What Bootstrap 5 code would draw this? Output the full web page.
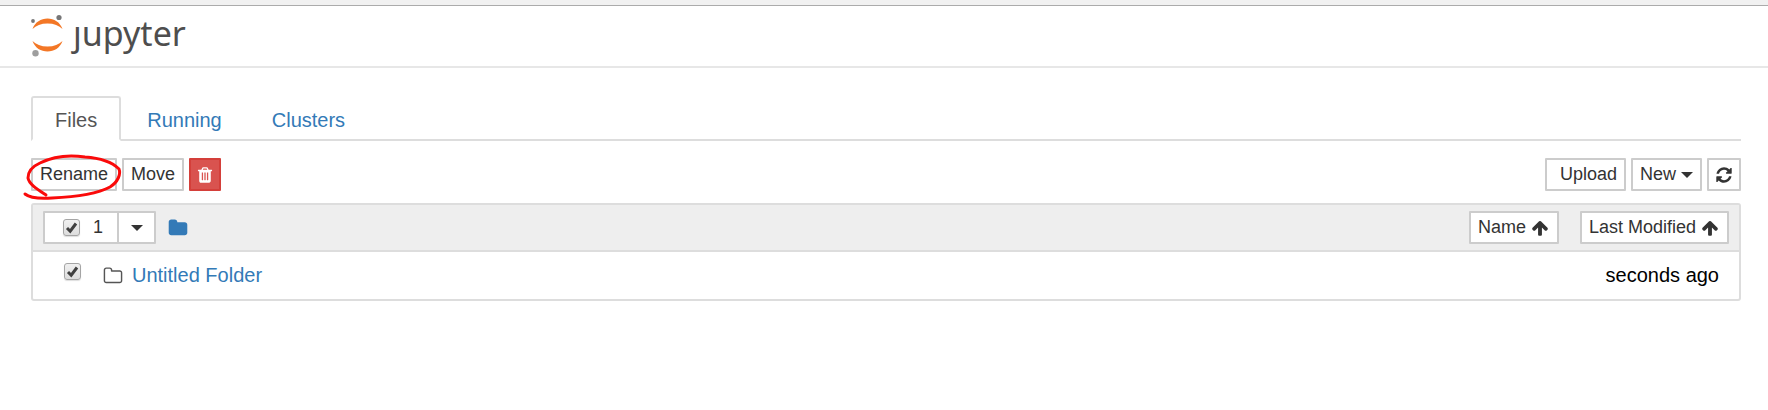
<!DOCTYPE html>
<html lang="en">
<head>
<meta charset="utf-8">
<meta name="viewport" content="width=device-width, initial-scale=1">
<title>Jupyter</title>
<link href="https://cdn.jsdelivr.net/npm/bootstrap@5.3.0/dist/css/bootstrap.min.css" rel="stylesheet">
<style>
body{font-family:"Liberation Sans",Arial,sans-serif;font-size:18px;line-height:25px;color:#000;background:#fff}
a{color:#337ab7;text-decoration:none}
svg.ic{width:18px;height:18px;fill:currentColor;flex:none}
svg.ic-lg{width:20px;height:20px}
.chrome{height:6px;background:#f1f1f1;border-bottom:1px solid #ababab}
.top{height:62px;border-bottom:2px solid #e7e7e7;padding:7px 31px}
.word{font:34px/40px "Noto Sans","Open Sans",sans-serif;color:#4e4e4e}
.word .tail{display:inline-block;clip-path:inset(14px -10px -10px -10px)}
.page-body{padding:28px 27px 0 31px}
.nav-tabs{--bs-nav-tabs-border-width:2px;--bs-nav-tabs-border-color:#ddd;--bs-nav-tabs-border-radius:3px;--bs-nav-tabs-link-active-color:#555;--bs-nav-tabs-link-active-border-color:#ddd #ddd #fff;--bs-nav-link-color:#337ab7;gap:2px;font-size:20px}
.nav-tabs .nav-link{padding:10px 22px;line-height:25px;height:45px}
.tools{margin:17px 0 12px}
.tools-group{gap:5px}
.btn-nb{font-size:18px;line-height:25px;height:33px;padding:2px 7px;border:2px solid #ccc;border-radius:1px;background:#fff;color:#333;display:inline-flex;align-items:center;gap:5px}
.btn-nb:hover{background:#eee;border-color:#bbb}
.btn-nb.del{background:#d9534f;border-color:#d43f3a;color:#fff;width:32px;justify-content:center;padding:0}
.btn-nb.upload{padding-left:13px}
.btn-nb.reload{padding:2px 6px}
.btn-nb.sort{padding-right:8px}
.tri{border:6px solid transparent;border-top-color:#333;border-bottom:0}
.circled{position:relative}
.circled svg{position:absolute;left:-11px;top:-10px;pointer-events:none}
.files{border:2px solid #ddd;border-radius:3px}
.files-head{background:#eee;border-bottom:2px solid #ddd;padding:6px 10px}
.select-all{padding-left:18px;padding-right:14px;gap:13px}
.select-menu{width:39px;justify-content:center;margin-left:-2px}
.home-link{margin-left:12px}
.sort-list{gap:21px}
.files-row{padding:11px 20px 11px 31px;font-size:20px;line-height:25px}
.item-link{margin-left:22px;gap:9px}
.item-link svg{color:#555}
.tick{appearance:none;margin:0;width:17px;height:17px;border:1px solid #a5a5a5;border-radius:3px;background:linear-gradient(#f0f0f0,#ddd);box-shadow:0 1px 1px #0002}
.tick:checked{background:url("data:image/svg+xml,%3Csvg xmlns='http://www.w3.org/2000/svg' viewBox='0 0 15 15'%3E%3Cpath d='M3 8l3.2 3.2L12 3.5' fill='none' stroke='%23404040' stroke-width='3'/%3E%3C/svg%3E"),linear-gradient(#f0f0f0,#ddd)}
</style>
</head>
<body>
<svg width="0" height="0" class="position-absolute" aria-hidden="true">
<symbol id="trash" viewBox="0 0 1792 1792"><path d="M704 1376v-704q0-14-9-23t-23-9h-64q-14 0-23 9t-9 23v704q0 14 9 23t23 9h64q14 0 23-9t9-23zm256 0v-704q0-14-9-23t-23-9h-64q-14 0-23 9t-9 23v704q0 14 9 23t23 9h64q14 0 23-9t9-23zm256 0v-704q0-14-9-23t-23-9h-64q-14 0-23 9t-9 23v704q0 14 9 23t23 9h64q14 0 23-9t9-23zm-544-992h448l-48-117q-7-9-17-11h-317q-10 2-17 11zm928 32v64q0 14-9 23t-23 9h-96v948q0 83-47 143.5t-113 60.5h-832q-66 0-113-58.5t-47-141.5v-952h-96q-14 0-23-9t-9-23v-64q0-14 9-23t23-9h309l70-167q15-37 54-63t79-26h320q40 0 79 26t54 63l70 167h309q14 0 23 9t9 23z"/></symbol>
<symbol id="refresh" viewBox="0 0 1792 1792"><path d="M1639 1056q0 5-1 7-64 268-268 434.5t-478 166.5q-146 0-282.5-55t-243.5-157l-129 129q-19 19-45 19t-45-19-19-45v-448q0-26 19-45t45-19h448q26 0 45 19t19 45-19 45l-137 137q71 66 161 102t187 36q134 0 250-65t186-179q11-17 53-117 8-23 30-23h192q13 0 22.5 9.5t9.5 22.5zm25-800v448q0 26-19 45t-45 19h-448q-26 0-45-19t-19-45 19-45l138-138q-148-137-349-137-134 0-250 65t-186 179q-11 17-53 117-8 23-30 23h-199q-13 0-22.5-9.5t-9.5-22.5v-7q65-268 270-434.5t480-166.5q146 0 284 55.5t245 156.5l130-129q19-19 45-19t45 19 19 45z"/></symbol>
<symbol id="up" viewBox="0 0 1792 1792"><path d="M1675 971q0 51-37 90l-75 75q-38 38-91 38-54 0-90-38l-294-293v704q0 52-37.5 84.5t-90.5 32.5h-128q-53 0-90.5-32.5t-37.5-84.5v-704l-294 293q-36 38-90 38t-90-38l-75-75q-38-38-38-90 0-53 38-91l651-651q35-37 90-37 54 0 91 37l651 651q37 39 37 91z"/></symbol>
<symbol id="folder" viewBox="0 0 1792 1792"><path d="M1728 608v704q0 92-66 158t-158 66h-1216q-92 0-158-66t-66-158v-960q0-92 66-158t158-66h320q92 0 158 66t66 158v32h672q92 0 158 66t66 158z"/></symbol>
<symbol id="folder-o" viewBox="0 0 1792 1792"><path d="M1600 1312v-704q0-40-28-68t-68-28h-704q-40 0-68-28t-28-68v-64q0-40-28-68t-68-28h-320q-40 0-68 28t-28 68v960q0 40 28 68t68 28h1216q40 0 68-28t28-68zm128-704v704q0 92-66 158t-158 66h-1216q-92 0-158-66t-66-158v-960q0-92 66-158t158-66h320q92 0 158 66t66 158v32h672q92 0 158 66t66 158z"/></symbol>
</svg>
<div class="chrome"></div>
<header class="top">
<a href="#" class="d-inline-flex align-items-start gap-2">
<svg width="34" height="46" viewBox="0 0 34 46" aria-hidden="true"><g fill="#f37726"><path d="M1.500 16C4 9 10 5.500 16.500 5.500S29 9 31.500 16C28 12.500 23 10.500 16.500 10.500S5 12.500 1.500 16Z"/><path d="M1.500 28C4 35 10 38.500 16.500 38.500S29 35 31.500 28C28 31.500 23 33.500 16.500 33.500S5 31.500 1.500 28Z"/></g><circle cx="2" cy="8" r="1.900" fill="#767677"/><circle cx="28" cy="4.500" r="2.600" fill="#767677"/><circle cx="4.500" cy="40.300" r="3.200" fill="#9e9e9e"/></svg>
<span class="word"><span class="tail">j</span>upyter</span>
</a>
</header>
<main class="page-body">
<ul class="nav nav-tabs">
<li class="nav-item"><a class="nav-link active" aria-current="page" href="#">Files</a></li>
<li class="nav-item"><a class="nav-link" href="#">Running</a></li>
<li class="nav-item"><a class="nav-link" href="#">Clusters</a></li>
</ul>
<div class="tools d-flex justify-content-between">
<div class="tools-group d-flex">
<div class="circled d-flex"><button type="button" class="btn btn-nb">Rename</button>
<svg width="110" height="56" viewBox="20 148 110 56" fill="none" stroke="#fa0a0a" stroke-width="3" stroke-linecap="round" aria-hidden="true"><path d="M25 194C30 198 38 199 52 198C75 197 97 194 110 187C118 182 121 174 119 169C112 162 100 158 85 157C65 154 52 157 40 163C31 167 28 172 28 178C29 184 37 189 46 195"/></svg></div>
<button type="button" class="btn btn-nb">Move</button>
<button type="button" class="btn btn-nb del" aria-label="Delete"><svg class="ic"><use href="#trash"/></svg></button>
</div>
<div class="tools-group d-flex">
<button type="button" class="btn btn-nb upload">Upload</button>
<button type="button" class="btn btn-nb">New<span class="tri"></span></button>
<button type="button" class="btn btn-nb reload" aria-label="Refresh"><svg class="ic"><use href="#refresh"/></svg></button>
</div>
</div>
<section class="files">
<div class="files-head d-flex align-items-center">
<div class="d-flex">
<label class="btn btn-nb select-all"><input type="checkbox" class="tick" checked>1</label>
<button type="button" class="btn btn-nb select-menu" aria-label="Select"><span class="tri"></span></button>
</div>
<a href="#" class="d-flex home-link" aria-label="Home"><svg class="ic ic-lg"><use href="#folder"/></svg></a>
<div class="sort-list d-flex ms-auto">
<button type="button" class="btn btn-nb sort">Name<svg class="ic"><use href="#up"/></svg></button>
<button type="button" class="btn btn-nb sort">Last Modified<svg class="ic"><use href="#up"/></svg></button>
</div>
</div>
<div class="files-row d-flex">
<input type="checkbox" class="tick" checked aria-label="Select Untitled Folder">
<a href="#" class="item-link d-flex align-items-center"><svg class="ic ic-lg"><use href="#folder-o"/></svg>Untitled Folder</a>
<span class="ms-auto">seconds ago</span>
</div>
</section>
</main>
<script src="https://cdn.jsdelivr.net/npm/bootstrap@5.3.0/dist/js/bootstrap.bundle.min.js"></script>
</body>
</html>
